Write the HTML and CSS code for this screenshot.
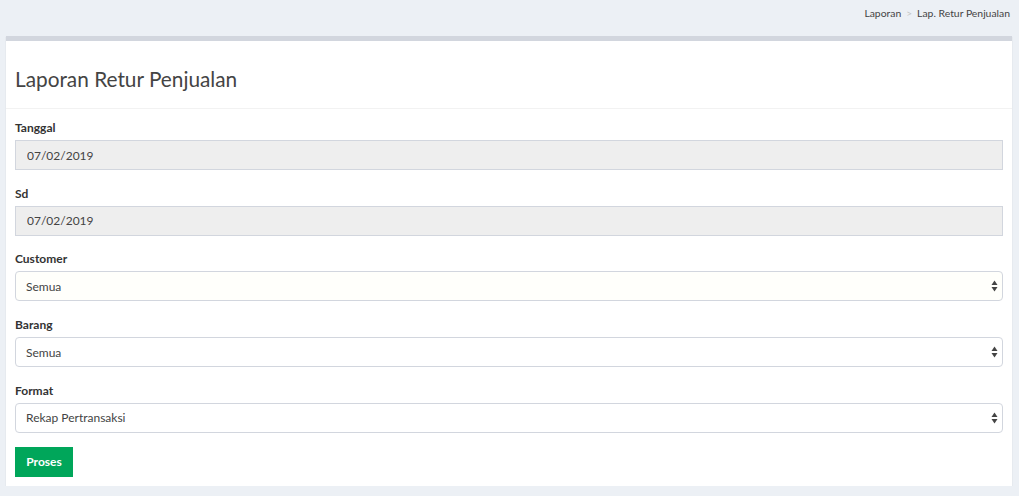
FILE: index.html
```html
<!DOCTYPE html>
<html>
<head>
<meta charset="utf-8">
<link rel="stylesheet" href="styles.css">
</head>
<body>
<div class="page">
  <div class="topbar">
    <ol class="breadcrumb">
      <li>Laporan</li>
      <li class="sep">&gt;</li>
      <li>Lap. Retur Penjualan</li>
    </ol>
  </div>
  <div class="box">
    <div class="box-header">
      <h3 class="box-title">Laporan Retur Penjualan</h3>
    </div>
    <form class="box-body">
      <div class="form-group">
        <label class="lbl">Tanggal</label>
        <input class="control disabled" type="text" value="07/02/2019" disabled>
      </div>
      <div class="form-group">
        <label class="lbl">Sd</label>
        <input class="control disabled" type="text" value="07/02/2019" disabled>
      </div>
      <div class="form-group">
        <label class="lbl">Customer</label>
        <div class="select-wrap">
          <select class="control sel cream"><option>Semua</option></select>
          <svg class="arrows" width="7" height="12" viewBox="0 0 7 12"><path d="M3.5 0.5 L6.5 5 L0.5 5 Z" fill="#444"/><path d="M3.5 11.5 L6.5 7 L0.5 7 Z" fill="#444"/></svg>
        </div>
      </div>
      <div class="form-group">
        <label class="lbl">Barang</label>
        <div class="select-wrap">
          <select class="control sel"><option>Semua</option></select>
          <svg class="arrows" width="7" height="12" viewBox="0 0 7 12"><path d="M3.5 0.5 L6.5 5 L0.5 5 Z" fill="#444"/><path d="M3.5 11.5 L6.5 7 L0.5 7 Z" fill="#444"/></svg>
        </div>
      </div>
      <div class="form-group last">
        <label class="lbl">Format</label>
        <div class="select-wrap">
          <select class="control sel"><option>Rekap Pertransaksi</option></select>
          <svg class="arrows" width="7" height="12" viewBox="0 0 7 12"><path d="M3.5 0.5 L6.5 5 L0.5 5 Z" fill="#444"/><path d="M3.5 11.5 L6.5 7 L0.5 7 Z" fill="#444"/></svg>
        </div>
      </div>
      <button type="button" class="btn">Proses</button>
    </form>
  </div>
</div>
</body>
</html>
```
FILE: styles.css
```css
html, body {
  margin: 0;
  padding: 0;
  background: #ecf0f5;
}
body {
  font-family: "Lato", "Liberation Sans", sans-serif;
  color: #333;
}
.page {
  padding: 0 7px 0 6px;
}
.topbar {
  height: 36px;
  display: flex;
  justify-content: flex-end;
}
.breadcrumb {
  list-style: none;
  margin: 0;
  padding: 6px 2px 0 0;
  display: flex;
  gap: 5px;
  font-size: 10.4px;
  line-height: 14px;
  color: #444;
}
.breadcrumb .sep {
  color: #c4c4c4;
  font-size: 10px;
}
.box {
  background: #fff;
  border-top: 5px solid #d2d6de;
  box-shadow: 0 1px 1px rgba(0,0,0,0.15);
}
.box-header {
  padding: 23px 9px 14px;
  border-bottom: 1px solid #f2f2f2;
}
.box-title {
  margin: 0;
  font-size: 20.8px;
  line-height: 30px;
  font-weight: 400;
  color: #444;
}
.box-body {
  padding: 11px 9px 9px;
  display: flex;
  flex-direction: column;
  align-items: flex-start;
}
.form-group {
  width: 100%;
  display: flex;
  flex-direction: column;
  margin-bottom: 15.7px;
}
.form-group.last {
  margin-bottom: 14px;
}
.lbl {
  font-size: 12px;
  font-weight: 700;
  line-height: 15px;
  margin-bottom: 5px;
  color: #333;
}
.control {
  box-sizing: border-box;
  width: 100%;
  height: 30px;
  margin: 0;
  padding: 0 11px;
  font-family: inherit;
  font-size: 12px;
  color: #444;
  border: 1px solid #d2d6de;
  background: #fff;
  outline: none;
}
.control.disabled {
  background: #eeeeee;
  border-radius: 0;
  -webkit-text-fill-color: #444;
  opacity: 1;
}
.select-wrap {
  position: relative;
  width: 100%;
}
.sel {
  -webkit-appearance: none;
  appearance: none;
  border-radius: 4px;
  padding-left: 10px;
}
.sel.cream {
  background: #fffffb;
}
.arrows {
  position: absolute;
  right: 5px;
  top: 9px;
  pointer-events: none;
}
.btn {
  width: 58px;
  height: 30px;
  border: none;
  border-radius: 0;
  background: #00a65a;
  color: #fff;
  font-family: inherit;
  font-size: 12px;
  font-weight: 700;
  padding: 0;
}
```
